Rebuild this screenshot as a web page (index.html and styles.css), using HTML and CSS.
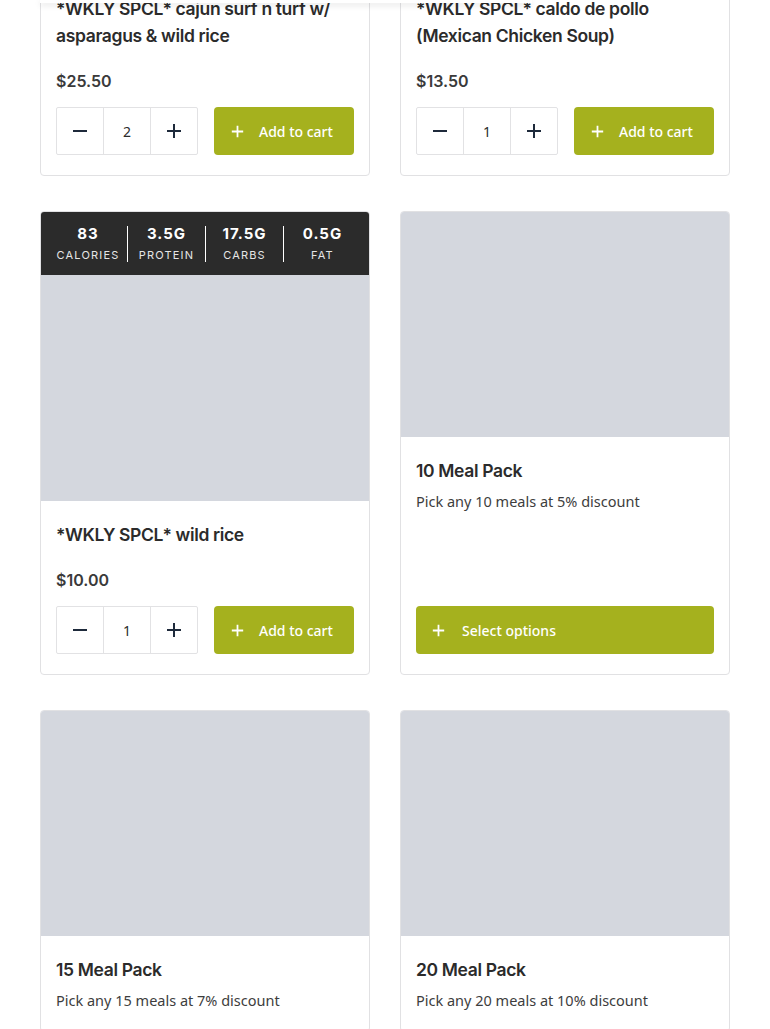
FILE: index.html
```html
<!DOCTYPE html>
<html lang="en">
<head>
<meta charset="utf-8">
<title>Meals</title>
<link rel="stylesheet" href="styles.css">
</head>
<body>
<div class="topbar"></div>
<main class="grid">
  <article class="card">
    <div class="img"></div>
    <div class="body">
      <h3 class="title">*WKLY SPCL* cajun surf n turf w/ asparagus &amp; wild rice</h3>
      <div class="price">$25.50</div>
      <div class="actions">
        <div class="qty">
          <span class="qbtn"><svg viewBox="0 0 16 16"><path d="M1 8h14"/></svg></span>
          <span class="qval">2</span>
          <span class="qbtn"><svg viewBox="0 0 16 16"><path d="M1 8h14M8 1v14"/></svg></span>
        </div>
        <button class="cart"><svg viewBox="0 0 16 16"><path d="M1 8h14M8 1v14"/></svg><span>Add to cart</span></button>
      </div>
    </div>
  </article>
  <article class="card">
    <div class="img"></div>
    <div class="body">
      <h3 class="title">*WKLY SPCL* caldo de pollo (Mexican Chicken Soup)</h3>
      <div class="price">$13.50</div>
      <div class="actions">
        <div class="qty">
          <span class="qbtn"><svg viewBox="0 0 16 16"><path d="M1 8h14"/></svg></span>
          <span class="qval">1</span>
          <span class="qbtn"><svg viewBox="0 0 16 16"><path d="M1 8h14M8 1v14"/></svg></span>
        </div>
        <button class="cart"><svg viewBox="0 0 16 16"><path d="M1 8h14M8 1v14"/></svg><span>Add to cart</span></button>
      </div>
    </div>
  </article>

  <article class="card">
    <div class="nutri">
      <div class="nc"><b>83</b><small>Calories</small></div>
      <div class="nc"><b>3.5G</b><small>Protein</small></div>
      <div class="nc"><b>17.5G</b><small>Carbs</small></div>
      <div class="nc"><b>0.5G</b><small>Fat</small></div>
    </div>
    <div class="img"></div>
    <div class="body">
      <h3 class="title">*WKLY SPCL* wild rice</h3>
      <div class="price">$10.00</div>
      <div class="actions">
        <div class="qty">
          <span class="qbtn"><svg viewBox="0 0 16 16"><path d="M1 8h14"/></svg></span>
          <span class="qval">1</span>
          <span class="qbtn"><svg viewBox="0 0 16 16"><path d="M1 8h14M8 1v14"/></svg></span>
        </div>
        <button class="cart"><svg viewBox="0 0 16 16"><path d="M1 8h14M8 1v14"/></svg><span>Add to cart</span></button>
      </div>
    </div>
  </article>
  <article class="card">
    <div class="img"></div>
    <div class="body">
      <h3 class="title">10 Meal Pack</h3>
      <p class="desc">Pick any 10 meals at 5% discount</p>
      <div class="actions pack">
        <button class="cart wide"><svg viewBox="0 0 16 16"><path d="M1 8h14M8 1v14"/></svg><span>Select options</span></button>
      </div>
    </div>
  </article>

  <article class="card">
    <div class="img"></div>
    <div class="body">
      <h3 class="title">15 Meal Pack</h3>
      <p class="desc">Pick any 15 meals at 7% discount</p>
    </div>
  </article>
  <article class="card">
    <div class="img"></div>
    <div class="body">
      <h3 class="title">20 Meal Pack</h3>
      <p class="desc">Pick any 20 meals at 10% discount</p>
    </div>
  </article>
</main>
</body>
</html>
```

FILE: styles.css
```css
* { box-sizing: border-box; }
html, body { margin: 0; padding: 0; background: #fff; }
body {
  font-family: "Noto Sans", "Open Sans", sans-serif;
  color: #333;
  overflow: hidden;
  height: 1029px;
  position: relative;
}
.topbar {
  position: absolute;
  top: 0;
  left: 40px;
  width: 492px;
  height: 3px;
  background: #fff;
  box-shadow: 0 2px 6px rgba(0,0,0,0.14);
  z-index: 5;
}
.grid {
  display: grid;
  grid-template-columns: 330px 330px;
  column-gap: 30px;
  row-gap: 35px;
  padding: 0 40px;
  margin-top: -251px;
}
.card {
  border: 1px solid #e1e1e3;
  border-radius: 4px;
  background: #fff;
  display: flex;
  flex-direction: column;
  overflow: hidden;
}
.img {
  height: 226px;
  background: #d4d7de;
  margin: -1px -1px 0;
  border-radius: 4px 4px 0 0;
}
.nutri + .img { border-radius: 0; }
.nutri {
  margin: -1px -1px 0;
  height: 65px;
  background: #2b2b2b;
  border-radius: 4px 4px 0 0;
  display: grid;
  grid-template-columns: repeat(4, 1fr);
  align-items: center;
  padding: 0 9px;
}
.nc {
  display: flex;
  flex-direction: column;
  align-items: center;
  border-left: 1px solid #fff;
  height: 36px;
  justify-content: center;
  gap: 8px;
}
.nc:first-child { border-left: 0; }
.nc b {
  font-family: "Inter", "Roboto", sans-serif;
  font-weight: 700;
  font-size: 15px;
  line-height: 15px;
  letter-spacing: 1px;
  color: #fff;
}
.nc small {
  font-family: "Inter", "Roboto", sans-serif;
  font-size: 11px;
  line-height: 12px;
  text-transform: uppercase;
  letter-spacing: 1.2px;
  color: #e6e6e6;
}
.body {
  flex: 1;
  display: flex;
  flex-direction: column;
  padding: 20px 15px 20px;
}
.title {
  margin: 0;
  font-family: "Inter", "Roboto", sans-serif;
  font-weight: 600;
  font-size: 17.5px;
  line-height: 27px;
  color: #2b2b2b;
  letter-spacing: -0.35px;
}
.price {
  margin-top: 21px;
  font-family: "Inter", "Roboto", sans-serif;
  font-weight: 600;
  font-size: 16px;
  line-height: 22px;
  color: #3a3a3a;
}
.desc {
  margin: 6px 0 0;
  font-size: 14.5px;
  line-height: 22px;
  color: #3d3d3d;
}
.actions {
  margin-top: auto;
  padding-top: 15px;
  display: flex;
  gap: 16px;
}
.actions.pack { padding-top: 30px; }
.qty {
  display: flex;
  border: 1px solid #e2e2e4;
  border-radius: 2px;
  height: 48px;
}
.qbtn, .qval {
  width: 46px;
  display: flex;
  align-items: center;
  justify-content: center;
}
.qval {
  width: 48px;
  border-left: 1px solid #e2e2e4;
  border-right: 1px solid #e2e2e4;
  font-size: 14px;
  color: #2b2b2b;
}
.qbtn svg {
  width: 16px;
  height: 16px;
  stroke: #1e2a3b;
  stroke-width: 2;
  fill: none;
}
.cart {
  flex: 1;
  height: 48px;
  border: 0;
  border-radius: 4px;
  background: #a5b11e;
  color: #fff;
  display: flex;
  align-items: center;
  padding: 0 0 0 17px;
  gap: 15px;
  font-family: "Noto Sans", "Open Sans", sans-serif;
  font-size: 14px;
  font-weight: 500;
}
.cart svg {
  width: 13px;
  height: 13px;
  stroke: #fff;
  stroke-width: 2.2;
  fill: none;
}
.cart.wide { padding-left: 16px; gap: 17px; }
```
